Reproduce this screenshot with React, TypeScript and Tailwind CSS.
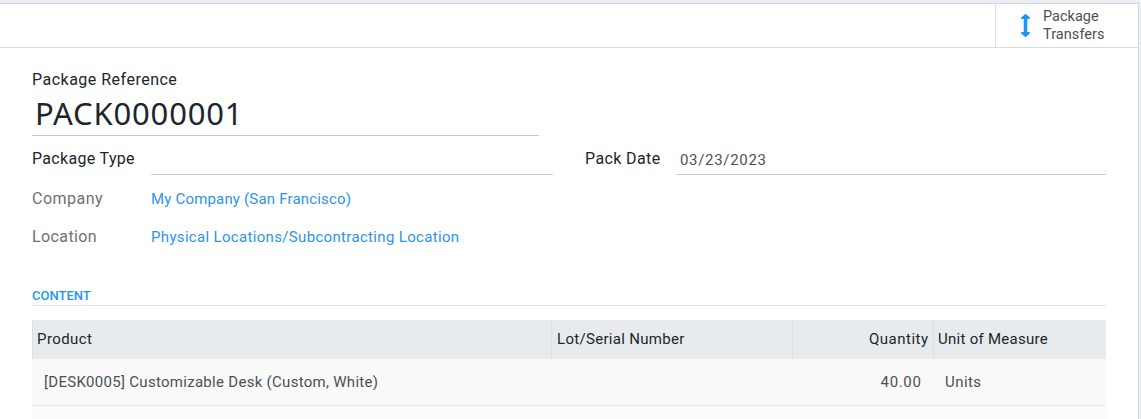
const title = "font-['Noto_Sans',sans-serif]";

export default function App() {
  return (
    <div className="h-[419px] w-[1141px] overflow-hidden bg-[#eaf0f6] pt-[3px] font-['Roboto',sans-serif] text-[15px] leading-[18px] whitespace-nowrap text-[#4c5154]">
      <div className="flex h-[416px] w-[1139px] flex-col border-t border-r border-[#d5d9dd] bg-white">
        <div className="flex h-[44px] shrink-0 justify-end border-b border-[#dcdddf]">
          <button className="flex w-[143px] items-center border-l border-[#dee2e6] text-left">
            <svg className="mb-px ml-[25px] h-[23px] w-[9px] shrink-0" viewBox="-64 -64 640 1792" preserveAspectRatio="none" fill="#1a97f5">
              <path d="M576 256q0 26-19 45t-45 19h-128v1024h128q26 0 45 19t19 45-19 45l-256 256q-19 19-45 19t-45-19l-256-256q-19-19-19-45t19-45 45-19h128v-1024h-128q-26 0-45-19t-19-45 19-45l256-256q19-19 45-19t45 19l256 256q19 19 19 45z" />
            </svg>
            <span className="ml-[13px] flex flex-col items-start text-[14.5px]">
              <span>Package</span>
              <span className="tracking-[0.05px]">Transfers</span>
            </span>
          </button>
        </div>
        <main className="flex w-[1106px] flex-col pl-8">
          <div className="flex h-[88px] w-[507px] flex-col border-b border-[#c9cbcd] pt-[21px] text-[#1c262b]">
            <label className="h-[22px] text-base leading-[22px] tracking-[0.49px]"><span>Package Reference</span></label>
            <div className={`${title} pl-[3px] text-[31px] leading-[44px] tracking-[0.83px]`}><span>PACK0000001</span></div>
          </div>
          <div className="flex h-[39px] text-[#1c262b]">
            <label className="w-[119px] pt-[12px] text-base leading-[22px] tracking-[0.32px]"><span>Package Type</span></label>
            <div className="w-[402px] border-b border-[#c9cbcd]" />
            <label className="ml-8 w-[91px] pt-[12px] text-base leading-[22px] tracking-[0.38px]"><span>Pack Date</span></label>
            <div className="flex-1 border-b border-[#c9cbcd] pt-[15px] pl-1 tracking-[0.68px] text-[#4c5154]"><span>03/23/2023</span></div>
          </div>
          <div className="flex h-[38px] items-start pt-[13px] leading-[22px]">
            <label className="w-[119px] text-base leading-[22px] tracking-[0.5px] text-[#6f7173]"><span>Company</span></label>
            <a className="tracking-[0.18px] text-[#2e93ee]"><span>My Company (San Francisco)</span></a>
          </div>
          <div className="flex h-[38px] items-start pt-[13px] leading-[22px]">
            <label className="w-[119px] text-base leading-[22px] tracking-[0.4px] text-[#6f7173]"><span>Location</span></label>
            <a className="tracking-[0.33px] text-[#2e93ee]"><span>Physical Locations/Subcontracting Location</span></a>
          </div>
          <h2 className="mt-[37px] h-[18px] border-b border-[#e1e3e5] text-[13px] leading-[16px] font-medium text-[#2396f3]"><span>CONTENT</span></h2>
          <div className="mt-[14px] grid h-[39px] grid-cols-[519px_241px_141px_173px] bg-[#e7ebee] pb-px leading-[38px] text-[#1c262b]">
            <div className="border-l border-[#dadfe2] pl-1 tracking-[0.42px]"><span>Product</span></div>
            <div className="border-l border-[#dadfe2] pl-[5px] tracking-[0.3px]"><span>Lot/Serial Number</span></div>
            <div className="border-l border-[#dadfe2] pr-[4.5px] text-right tracking-[0.48px]"><span>Quantity</span></div>
            <div className="border-l border-[#dadfe2] pl-1 tracking-[0.27px]"><span>Unit of Measure</span></div>
          </div>
          <div className="grid h-[47px] grid-cols-[519px_241px_141px_173px] border-b border-[#e5e7e9] bg-[#f9f9f9] leading-[46px]">
            <div className="pl-3 tracking-[0.29px]"><span>[DESK0005] Customizable Desk (Custom, White)</span></div>
            <div />
            <div className="pr-[11.5px] text-right tracking-[0.65px]"><span>40.00</span></div>
            <div className="pl-3 tracking-[0.45px]"><span>Units</span></div>
          </div>
          <div className="h-[20px] bg-[#fcfcfc]" />
        </main>
      </div>
    </div>
  );
}
